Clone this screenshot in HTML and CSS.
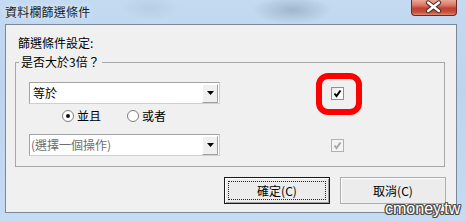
FILE: index.html
```html
<!DOCTYPE html>
<html lang="zh-Hant">
<head>
<meta charset="utf-8">
<title>資料欄篩選條件</title>
<link rel="stylesheet" href="styles.css">
</head>
<body>
<div class="window">
  <div class="titlebar">
    <span class="title">資料欄篩選條件</span>
    <div class="close">
      <svg width="46" height="16" viewBox="0 0 46 16">
        <path d="M17.5 3.5 L28.5 12 M28.5 3.5 L17.5 12" stroke="#4a2a24" stroke-width="4.6" stroke-linecap="round" fill="none"/>
        <path d="M17.5 3.5 L28.5 12 M28.5 3.5 L17.5 12" stroke="#ffffff" stroke-width="2.6" stroke-linecap="round" fill="none"/>
      </svg>
    </div>
  </div>
  <div class="client">
    <div class="heading">篩選條件設定:</div>
    <fieldset class="group">
      <legend class="legend">是否大於3倍？</legend>
      <div class="row">
        <div class="combo">
          <span class="combo-text">等於</span>
          <span class="combo-btn"><svg width="7" height="4" viewBox="0 0 7 4"><polygon points="0,0 7,0 3.5,4" fill="#000"/></svg></span>
        </div>
        <div class="check-wrap">
          <span class="check">
            <svg width="11" height="11" viewBox="0 0 11 11"><polyline points="2.5,5.5 4.5,8 8.5,2.5" fill="none" stroke="#000" stroke-width="2"/></svg>
          </span>
          <span class="highlight"></span>
        </div>
      </div>
      <div class="radios">
        <span class="radio-item"><span class="radio on"></span><span class="radio-label">並且</span></span>
        <span class="radio-item second"><span class="radio"></span><span class="radio-label">或者</span></span>
      </div>
      <div class="row row-last">
        <div class="combo">
          <span class="combo-text placeholder">(選擇一個操作)</span>
          <span class="combo-btn"><svg width="7" height="4" viewBox="0 0 7 4"><polygon points="0,0 7,0 3.5,4" fill="#000"/></svg></span>
        </div>
        <div class="check-wrap">
          <span class="check disabled">
            <svg width="11" height="11" viewBox="0 0 11 11"><polyline points="2.5,5.5 4.5,8 8.5,2.5" fill="none" stroke="#a8a8a8" stroke-width="2"/></svg>
          </span>
        </div>
      </div>
    </fieldset>
    <div class="buttons">
      <button class="btn btn-default"><span class="focus">確定(C)</span></button>
      <button class="btn">取消(C)</button>
    </div>
  </div>
  <div class="watermark">cmoney.tw</div>
</div>
</body>
</html>
```

FILE: styles.css
```css
html, body {
  margin: 0;
  padding: 0;
}

body {
  width: 466px;
  height: 221px;
  overflow: hidden;
  font-family: "Noto Sans CJK TC", "Noto Sans", sans-serif;
  font-size: 12px;
  color: #000;
  background: linear-gradient(180deg, #c3daf1 0%, #bcd4ee 40%, #c4dbf2 100%);
}

.window {
  position: relative;
  width: 466px;
  height: 221px;
  display: flex;
  flex-direction: column;
}

.titlebar {
  height: 24px;
  display: flex;
  align-items: flex-start;
  background: radial-gradient(ellipse 40px 14px at 292px 10px, rgba(120,140,160,0.45), rgba(120,140,160,0) 100%),
              radial-gradient(ellipse 30px 12px at 150px 8px, rgba(150,170,190,0.25), rgba(150,170,190,0) 100%);
}

.title {
  padding-left: 5px;
  line-height: 24px;
  color: #1b1b1b;
  letter-spacing: 0.2px;
  text-shadow: 0 0 6px rgba(255,255,255,0.9);
}

.close {
  margin-left: auto;
  margin-right: 9px;
  width: 46px;
  height: 16px;
  box-sizing: border-box;
  border: 1px solid #6b2a22;
  border-top: none;
  border-radius: 0 0 4px 4px;
  background: linear-gradient(180deg, #e9a796 0%, #d9786a 35%, #c2402f 55%, #c4503c 80%, #d98a70 100%);
  display: flex;
}

.close svg {
  margin: -1px 0 0 -1px;
}

.client {
  margin: 0 9px 0 5px;
  height: 189px;
  box-sizing: border-box;
  border: 1px solid #7b8896;
  background: #f0f0f0;
  display: flex;
  flex-direction: column;
}

.heading {
  margin: 10px 0 0 12px;
  line-height: 16px;
}

.group {
  margin: 4px 11px 0 9px;
  padding: 13px 0 10px 0;
  border: 1px solid #a7a7a7;
  min-width: 0;
}

.legend {
  margin-left: 3px;
  padding: 0 2px;
  line-height: 14px;
  font-size: 12px;
}

.row {
  display: flex;
  align-items: center;
  padding-left: 13px;
  height: 22px;
}

.row-last {
  margin-top: 10px;
}

.combo {
  width: 191px;
  height: 22px;
  box-sizing: border-box;
  border: 1px solid #a3a3a3;
  border-right-color: #cfcfcf;
  border-bottom-color: #cfcfcf;
  background: #fff;
  display: flex;
  align-items: center;
}

.combo-text {
  flex: 1;
  padding-left: 3px;
  line-height: 20px;
}

.combo-text.placeholder {
  padding-left: 1px;
  color: #6d6d6d;
}

.combo-btn {
  width: 16px;
  height: 19px;
  margin-right: 1px;
  box-sizing: border-box;
  background: #f0f0f0;
  border-left: 1px solid #fff;
  border-top: 1px solid #fff;
  border-right: 1px solid #a0a0a0;
  border-bottom: 1px solid #a0a0a0;
  display: flex;
  align-items: center;
  justify-content: center;
}

.check-wrap {
  position: relative;
  margin-left: 111px;
  width: 13px;
  height: 13px;
}

.check {
  width: 13px;
  height: 13px;
  box-sizing: border-box;
  border: 1px solid #8e8f8f;
  background: linear-gradient(135deg, #e6e6e6 0%, #ffffff 60%);
  display: flex;
}

.check.disabled {
  border-color: #b1b1b1;
  background: #f4f4f4;
}

.highlight {
  position: absolute;
  left: -15px;
  top: -14px;
  width: 46px;
  height: 42px;
  box-sizing: border-box;
  border: 6px solid #ff0000;
  border-radius: 12px;
}

.radios {
  display: flex;
  align-items: center;
  height: 16px;
  margin-top: 4px;
  padding-left: 46px;
}

.radio-item {
  display: flex;
  align-items: center;
}

.radio-item.second {
  margin-left: 26px;
}

.radio {
  width: 12px;
  height: 12px;
  box-sizing: border-box;
  border: 1px solid #7e7e7e;
  border-radius: 50%;
  background: #fff;
  display: flex;
  align-items: center;
  justify-content: center;
}

.radio.on::after {
  content: "";
  width: 4px;
  height: 4px;
  border-radius: 50%;
  background: #111;
}

.radio-label {
  margin-left: 3px;
  line-height: 16px;
}

.buttons {
  display: flex;
  justify-content: flex-end;
  gap: 10px;
  margin-top: 10px;
  padding-right: 10px;
}

.btn {
  width: 106px;
  height: 27px;
  box-sizing: border-box;
  margin: 0;
  padding: 0;
  font-family: "Noto Sans CJK TC", "Noto Sans", sans-serif;
  font-size: 12px;
  color: #000;
  background: #ececec;
  border: 1px solid #adadad;
  box-shadow: inset 1px 1px 0 #fcfcfc;
  display: flex;
  align-items: center;
  justify-content: center;
  line-height: 16px;
}

.btn-default {
  border: 1px solid #1a1a1a;
  box-shadow: inset 1px 1px 0 #ffffff, inset -1px -1px 0 #a0a0a0;
  padding: 3px;
}

.focus {
  flex: 1;
  align-self: stretch;
  border: 1px dotted #222;
  display: flex;
  align-items: center;
  justify-content: center;
}

.watermark {
  position: absolute;
  left: 385px;
  top: 200px;
  font-family: "Liberation Sans", Arial, sans-serif;
  font-size: 16px;
  line-height: 18px;
  color: #ffffff;
  text-shadow: 1px 0 0 #4d4d4d, -1px 0 0 #4d4d4d, 0 1px 0 #4d4d4d, 0 -1px 0 #4d4d4d,
               1px 1px 0 #4d4d4d, -1px -1px 0 #4d4d4d, 1px -1px 0 #4d4d4d, -1px 1px 0 #4d4d4d;
}
```
